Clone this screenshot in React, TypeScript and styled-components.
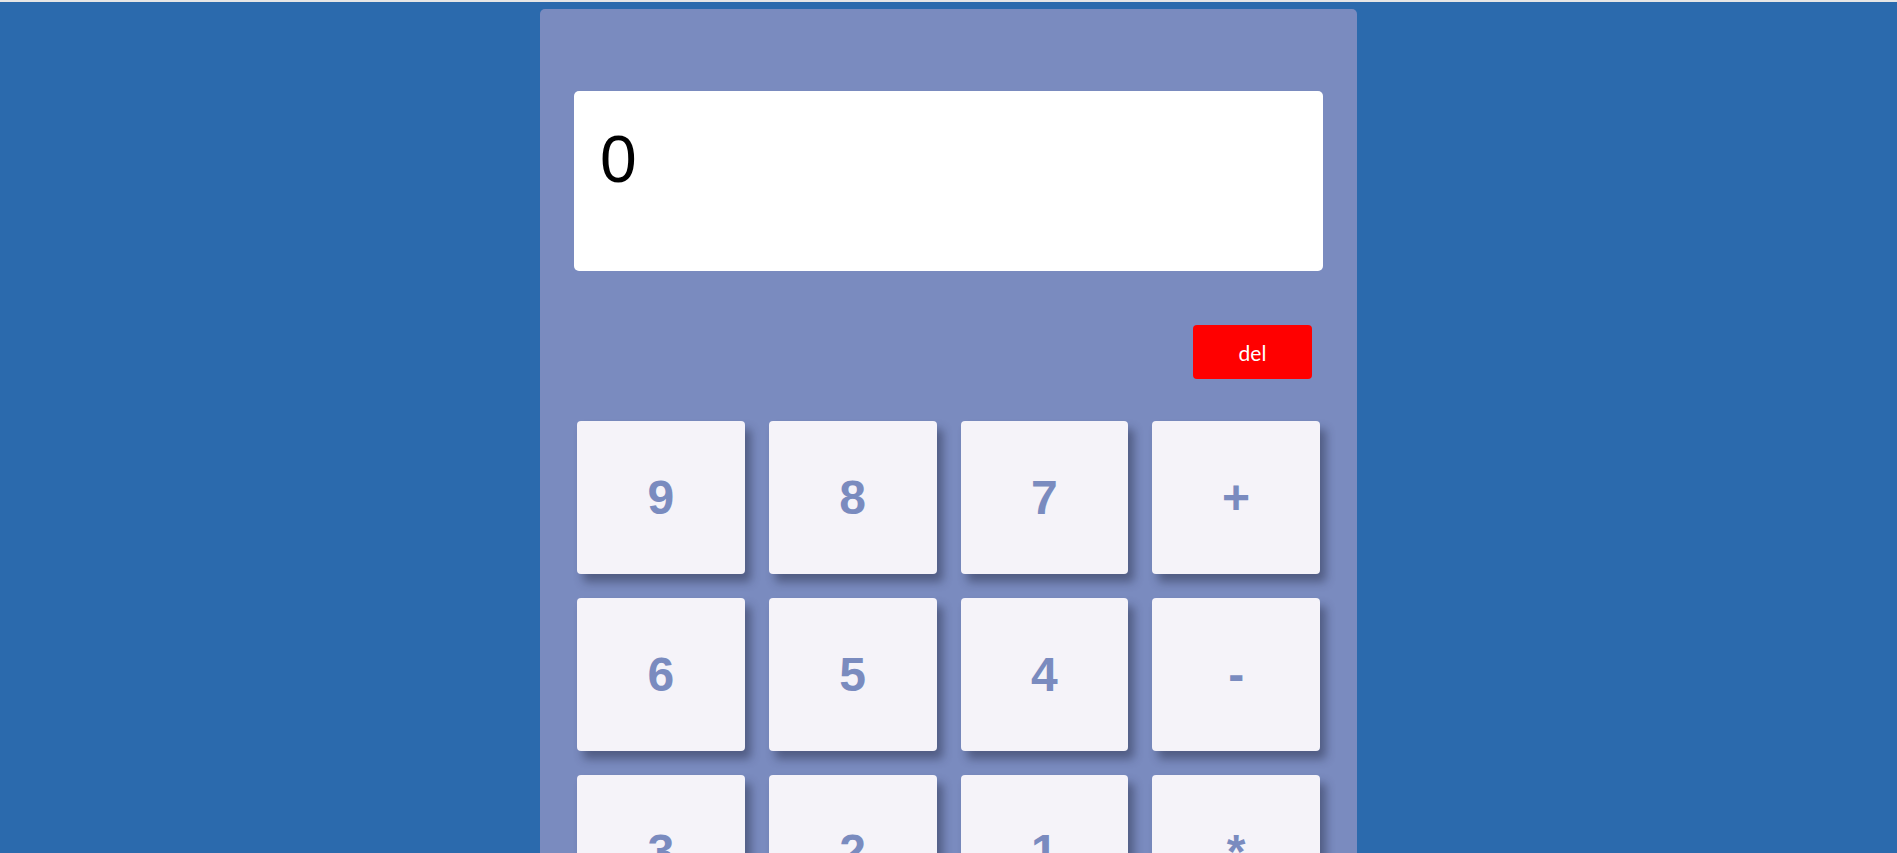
import React, { useState } from "react";
import styled, { createGlobalStyle } from "styled-components";

const GlobalStyle = createGlobalStyle`
  html, body {
    margin: 0;
    padding: 0;
    background: #2b6aad;
  }
  body {
    font-family: "Liberation Sans", Arial, sans-serif;
  }
`;

const Page = styled.div`
  min-height: 100vh;
  box-sizing: border-box;
  border-top: 2px solid #e6e6e6;
  background: #2b6aad;
  padding-top: 7px;
  display: flex;
  justify-content: center;
  align-items: flex-start;
`;

const Card = styled.div`
  width: 817px;
  box-sizing: border-box;
  background: #7a8bbf;
  border-radius: 5px;
  padding: 82px 34px 40px;
  display: flex;
  flex-direction: column;
`;

const Display = styled.div`
  height: 180px;
  box-sizing: border-box;
  background: #ffffff;
  border-radius: 5px;
  padding: 35px 26px 0;
  font-family: "Liberation Sans", Arial, sans-serif;
  font-size: 66px;
  line-height: 66px;
  color: #000000;
`;

const ActionRow = styled.div`
  display: flex;
  justify-content: flex-end;
  padding-right: 11px;
  margin-top: 54px;
`;

const DeleteButton = styled.button`
  width: 119px;
  height: 54px;
  border: none;
  border-radius: 4px;
  background: #ff0000;
  color: #ffffff;
  font-family: Lato, "Noto Sans", sans-serif;
  font-size: 21px;
  cursor: pointer;
`;

const Keypad = styled.div`
  margin: 42px 3px 0;
  display: grid;
  grid-template-columns: repeat(4, 1fr);
  grid-auto-rows: 153px;
  gap: 24px;
`;

const Key = styled.button`
  border: none;
  border-radius: 4px;
  background: #f5f3f9;
  color: #7a8bbf;
  font-family: "Liberation Sans", Arial, sans-serif;
  font-weight: 700;
  font-size: 48px;
  box-shadow: 6px 8px 10px rgba(30, 35, 60, 0.45);
  cursor: pointer;
  display: flex;
  align-items: center;
  justify-content: center;
  padding: 0;
`;

const keys = ["9", "8", "7", "+", "6", "5", "4", "-", "3", "2", "1", "*", "0", ".", "=", "/"];

export default function App() {
  const [value, setValue] = useState("0");

  const press = (k: string) => {
    if (k === "=") {
      try {
        // eslint-disable-next-line no-new-func
        const r = Function(`return (${value})`)();
        setValue(String(r));
      } catch {
        setValue("0");
      }
      return;
    }
    setValue((v) => (v === "0" && k !== "." ? k : v + k));
  };

  const del = () => setValue((v) => (v.length > 1 ? v.slice(0, -1) : "0"));

  return (
    <>
      <GlobalStyle />
      <Page>
        <Card>
          <Display>{value}</Display>
          <ActionRow>
            <DeleteButton onClick={del}>del</DeleteButton>
          </ActionRow>
          <Keypad>
            {keys.map((k) => (
              <Key key={k} onClick={() => press(k)}>
                {k}
              </Key>
            ))}
          </Keypad>
        </Card>
      </Page>
    </>
  );
}
